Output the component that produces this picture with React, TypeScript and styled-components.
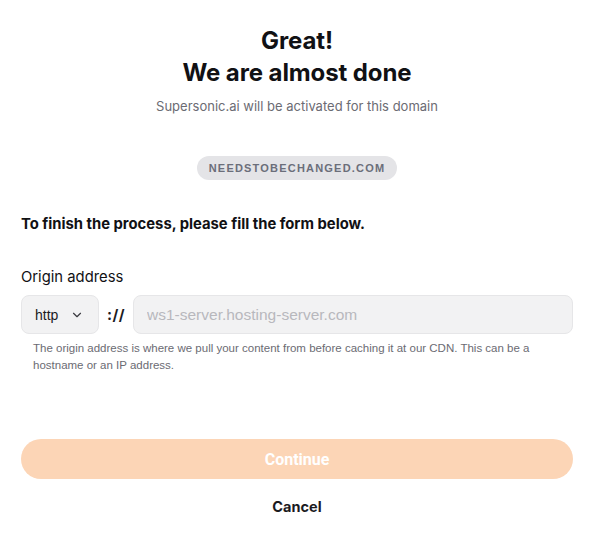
import { FC } from "react";
import styled, { createGlobalStyle } from "styled-components";
import { ChevronDown } from "lucide-react";

const GlobalStyle = createGlobalStyle`
	* {
		box-sizing: border-box;
	}

	body {
		margin: 0;
		background: #ffffff;
		font-family: "Inter", "Liberation Sans", sans-serif;
		color: #15151a;
	}
`;

const App: FC = () => {
	return (
		<>
			<GlobalStyle />
			<Wrapper>
				<Header>
					<h1>
						Great!
						<br />
						We are almost done
					</h1>
					<p>Supersonic.ai will be activated for this domain</p>
				</Header>

				<DomainPill>NEEDSTOBECHANGED.COM</DomainPill>

				<Intro>To finish the process, please fill the form below.</Intro>

				<Field>
					<Label>Origin address</Label>
					<InputRow>
						<ProtocolSelect type='button'>
							http
							<ChevronDown size={14} strokeWidth={2} />
						</ProtocolSelect>
						<Separator>://</Separator>
						<HostInput placeholder='ws1-server.hosting-server.com' />
					</InputRow>
					<Hint>
						The origin address is where we pull your content from before
						caching it at our CDN. This can be a hostname or an IP address.
					</Hint>
				</Field>

				<Actions>
					<ContinueButton disabled>Continue</ContinueButton>
					<CancelButton type='button'>Cancel</CancelButton>
				</Actions>
			</Wrapper>
		</>
	);
};

export default App;

const Wrapper = styled.main`
	width: 595px;
	padding: 25px 22px 0 21px;
	display: flex;
	flex-direction: column;
`;

const Header = styled.section`
	text-align: center;

	h1 {
		margin: 0;
		font-size: 24px;
		font-weight: 700;
		line-height: 32px;
		letter-spacing: -0.1px;
		color: #111114;
	}

	p {
		margin: 8px 0 0;
		font-size: 13px;
		line-height: 18px;
		color: #6b6b73;
	}
`;

const DomainPill = styled.div`
	align-self: center;
	margin-top: 41px;
	height: 24px;
	padding: 0 12px;
	display: flex;
	align-items: center;
	border-radius: 12px;
	background: #e4e4e7;
	font-family: "Liberation Sans", Arial, sans-serif;
	font-size: 11px;
	font-weight: 700;
	letter-spacing: 1.2px;
	color: #6b6e7a;
`;

const Intro = styled.p`
	margin: 34px 0 0;
	font-size: 14.8px;
	font-weight: 700;
	line-height: 20px;
	color: #111114;
`;

const Field = styled.div`
	margin-top: 33px;
	display: flex;
	flex-direction: column;
`;

const Label = styled.label`
	font-size: 14.8px;
	line-height: 20px;
	color: #111114;
	margin-bottom: 8px;
`;

const InputRow = styled.div`
	display: flex;
	align-items: center;
	gap: 8px;
`;

const ProtocolSelect = styled.button`
	width: 78px;
	height: 39px;
	display: flex;
	align-items: center;
	gap: 12px;
	padding: 0 13px;
	border: 1px solid #e6e6e8;
	border-radius: 8px;
	background: #f2f2f3;
	font-family: "Liberation Sans", Arial, sans-serif;
	font-size: 14px;
	color: #1b1b1f;

	svg {
		color: #3a3a40;
	}
`;

const Separator = styled.span`
	font-size: 15px;
	font-weight: 700;
	color: #1b1b1f;
	width: 18px;
	letter-spacing: 0.5px;
`;

const HostInput = styled.input`
	flex: 1;
	height: 39px;
	padding: 0 13px;
	border: 1px solid #e6e6e8;
	border-radius: 8px;
	background: #f2f2f3;
	font-family: "Liberation Sans", Arial, sans-serif;
	font-size: 15.5px;
	color: #1b1b1f;
	outline: none;

	&::placeholder {
		color: #b8b8bd;
	}
`;

const Hint = styled.p`
	margin: 6px 0 0 12px;
	max-width: 520px;
	font-family: "Liberation Sans", Arial, sans-serif;
	font-size: 11.5px;
	line-height: 17px;
	color: #6b6b73;
`;

const Actions = styled.div`
	margin-top: 65px;
	display: flex;
	flex-direction: column;
	align-items: center;
	gap: 18px;
`;

const ContinueButton = styled.button`
	width: 100%;
	height: 40px;
	border: none;
	border-radius: 20px;
	background: #fcd5b6;
	font-family: "Roboto", "Liberation Sans", sans-serif;
	font-size: 16px;
	font-weight: 700;
	color: #ffffff;
`;

const CancelButton = styled.button`
	border: none;
	background: none;
	padding: 0;
	font: inherit;
	font-size: 14.5px;
	font-weight: 700;
	line-height: 20px;
	color: #1b1b1f;
	cursor: pointer;
`;
